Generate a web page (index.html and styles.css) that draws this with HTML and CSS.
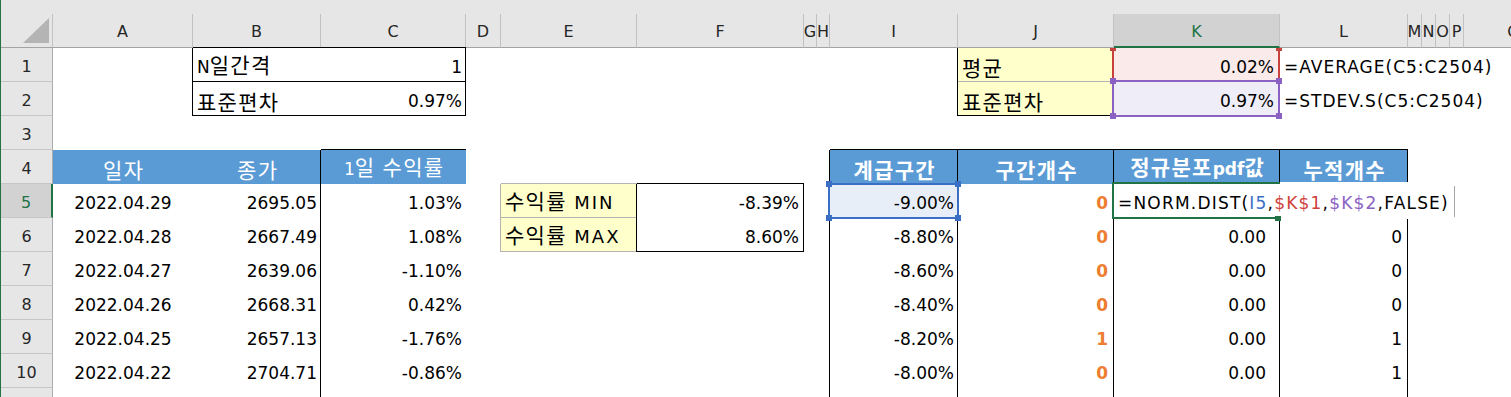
FILE: index.html
```html
<!DOCTYPE html>
<html lang="ko">
<head>
<meta charset="utf-8">
<title>Sheet</title>
<link rel="stylesheet" href="styles.css">
</head>
<body>
<div class="app">
  <div class="edge"></div>
  <div class="sheet">
    <div class="topbar"></div>

    <div class="row hdr">
      <div class="corner"><svg width="52" height="33" viewBox="0 0 52 33"><polygon points="22,29 48,29 48,4" fill="#b4b4b4"/></svg></div>
      <div class="ch">A</div><div class="ch">B</div><div class="ch">C</div><div class="ch">D</div>
      <div class="ch">E</div><div class="ch">F</div><div class="ch">G</div><div class="ch">H</div>
      <div class="ch">I</div><div class="ch">J</div><div class="ch sel">K</div><div class="ch">L</div>
      <div class="ch">M</div><div class="ch">N</div><div class="ch">O</div><div class="ch">P</div><div class="ch">Q</div>
    </div>

    <div class="row">
      <div class="rh">1</div>
      <div class="c"></div>
      <div class="c bl bt bb"><span>N<span class="ko">일간격</span></span></div>
      <div class="c r br bt bb">1</div>
      <div class="c"></div><div class="c"></div><div class="c"></div><div class="c"></div><div class="c"></div><div class="c"></div>
      <div class="c yel bl gb"><span class="ko">평균</span></div>
      <div class="c r pos pink pk1">0.02%<div class="ref red"><i class="h tl"></i><i class="h tr"></i></div></div>
      <div class="c f">=AVERAGE(C5:C2504)</div>
      <div class="c"></div><div class="c"></div><div class="c"></div><div class="c"></div><div class="c"></div>
    </div>

    <div class="row">
      <div class="rh">2</div>
      <div class="c"></div>
      <div class="c bl bb"><span class="ko">표준편차</span></div>
      <div class="c r br bb">0.97%</div>
      <div class="c"></div><div class="c"></div><div class="c"></div><div class="c"></div><div class="c"></div><div class="c"></div>
      <div class="c yel bl bb"><span class="ko">표준편차</span></div>
      <div class="c r pos lav pk1">0.97%<div class="ref pur"><i class="h tl"></i><i class="h tr"></i><i class="h bl4"></i><i class="h br4"></i></div></div>
      <div class="c f">=STDEV.S(C5:C2504)</div>
      <div class="c"></div><div class="c"></div><div class="c"></div><div class="c"></div><div class="c"></div>
    </div>

    <div class="row">
      <div class="rh">3</div>
      <div class="c"></div><div class="c"></div><div class="c"></div><div class="c"></div><div class="c"></div><div class="c"></div>
      <div class="c"></div><div class="c"></div><div class="c"></div><div class="c"></div><div class="c"></div><div class="c"></div>
      <div class="c"></div><div class="c"></div><div class="c"></div><div class="c"></div><div class="c"></div>
    </div>

    <div class="row">
      <div class="rh">4</div>
      <div class="c hb ctr"><span class="ko">일자</span></div>
      <div class="c hb ctr"><span class="ko">종가</span></div>
      <div class="c hb ctr bl bt"><span>1<span class="ko">일 수익률</span></span></div>
      <div class="c"></div><div class="c"></div><div class="c"></div><div class="c"></div><div class="c"></div>
      <div class="c hb ctr b bl bt br"><span class="ko">계급구간</span></div>
      <div class="c hb ctr b bt br"><span class="ko">구간개수</span></div>
      <div class="c hb ctr b bt br"><span><span class="ko">정규분포</span>pdf<span class="ko">값</span></span></div>
      <div class="c hb ctr b bt br"><span class="ko">누적개수</span></div>
      <div class="c"></div><div class="c"></div><div class="c"></div><div class="c"></div><div class="c"></div>
    </div>

    <div class="row">
      <div class="rh sel">5</div>
      <div class="c ctr">2022.04.29</div>
      <div class="c r">2695.05</div>
      <div class="c r bl">1.03%</div>
      <div class="c"></div>
      <div class="c yel gl gt gb"><span><span class="ko">수익률</span> <span class="lat">MIN</span></span></div>
      <div class="c r pf bl bt br">-8.39%</div>
      <div class="c"></div><div class="c"></div>
      <div class="c r pos sky bl br">-9.00%<div class="ref blu"><i class="h tl"></i><i class="h tr"></i><i class="h bl4"></i><i class="h br4"></i></div></div>
      <div class="c r pj org br">0</div>
      <div class="c pos br">
        <div class="editor"><div class="frame"><i class="grip"></i></div><span class="etext">=NORM.DIST(<span class="cb">I5</span>,<span class="cr">$K$1</span>,<span class="cp">$K$2</span>,FALSE)</span><i class="caret"></i></div>
      </div>
      <div class="c br"></div>
      <div class="c"></div><div class="c"></div><div class="c"></div><div class="c"></div><div class="c"></div>
    </div>

    <div class="row">
      <div class="rh">6</div>
      <div class="c ctr">2022.04.28</div>
      <div class="c r">2667.49</div>
      <div class="c r bl">1.08%</div>
      <div class="c"></div>
      <div class="c yel gl gb"><span><span class="ko">수익률</span> <span class="lat">MAX</span></span></div>
      <div class="c r pf bl br bb">8.60%</div>
      <div class="c"></div><div class="c"></div>
      <div class="c r bl br">-8.80%</div>
      <div class="c r pj org br">0</div>
      <div class="c r pk br">0.00</div>
      <div class="c r pl br">0</div>
      <div class="c"></div><div class="c"></div><div class="c"></div><div class="c"></div><div class="c"></div>
    </div>

    <div class="row">
      <div class="rh">7</div>
      <div class="c ctr">2022.04.27</div>
      <div class="c r">2639.06</div>
      <div class="c r bl">-1.10%</div>
      <div class="c"></div><div class="c"></div><div class="c"></div><div class="c"></div><div class="c"></div>
      <div class="c r bl br">-8.60%</div>
      <div class="c r pj org br">0</div>
      <div class="c r pk br">0.00</div>
      <div class="c r pl br">0</div>
      <div class="c"></div><div class="c"></div><div class="c"></div><div class="c"></div><div class="c"></div>
    </div>

    <div class="row">
      <div class="rh">8</div>
      <div class="c ctr">2022.04.26</div>
      <div class="c r">2668.31</div>
      <div class="c r bl">0.42%</div>
      <div class="c"></div><div class="c"></div><div class="c"></div><div class="c"></div><div class="c"></div>
      <div class="c r bl br">-8.40%</div>
      <div class="c r pj org br">0</div>
      <div class="c r pk br">0.00</div>
      <div class="c r pl br">0</div>
      <div class="c"></div><div class="c"></div><div class="c"></div><div class="c"></div><div class="c"></div>
    </div>

    <div class="row">
      <div class="rh">9</div>
      <div class="c ctr">2022.04.25</div>
      <div class="c r">2657.13</div>
      <div class="c r bl">-1.76%</div>
      <div class="c"></div><div class="c"></div><div class="c"></div><div class="c"></div><div class="c"></div>
      <div class="c r bl br">-8.20%</div>
      <div class="c r pj org br">1</div>
      <div class="c r pk br">0.00</div>
      <div class="c r pl br">1</div>
      <div class="c"></div><div class="c"></div><div class="c"></div><div class="c"></div><div class="c"></div>
    </div>

    <div class="row">
      <div class="rh">10</div>
      <div class="c ctr">2022.04.22</div>
      <div class="c r">2704.71</div>
      <div class="c r bl">-0.86%</div>
      <div class="c"></div><div class="c"></div><div class="c"></div><div class="c"></div><div class="c"></div>
      <div class="c r bl br">-8.00%</div>
      <div class="c r pj org br">0</div>
      <div class="c r pk br">0.00</div>
      <div class="c r pl br">1</div>
      <div class="c"></div><div class="c"></div><div class="c"></div><div class="c"></div><div class="c"></div>
    </div>

    <div class="row">
      <div class="rh"></div>
      <div class="c"></div><div class="c"></div>
      <div class="c bl"></div>
      <div class="c"></div><div class="c"></div><div class="c"></div><div class="c"></div><div class="c"></div>
      <div class="c bl br"></div>
      <div class="c br"></div>
      <div class="c br"></div>
      <div class="c br"></div>
      <div class="c"></div><div class="c"></div><div class="c"></div><div class="c"></div><div class="c"></div>
    </div>
  </div>
</div>
</body>
</html>
```

FILE: styles.css
```css
html, body {
  margin: 0;
  padding: 0;
  overflow: hidden;
  background: #ffffff;
}

body {
  font-family: "DejaVu Sans", "Noto Sans CJK KR", sans-serif;
  font-size: 17px;
  color: #000;
}

.app {
  display: flex;
  width: 1511px;
  height: 397px;
  overflow: hidden;
}

.edge {
  flex: none;
  width: 1px;
  background: #217346;
}

.sheet {
  flex: none;
  width: 1563px;
}

.topbar {
  height: 14px;
  background: #e6e6e6;
}

.row {
  display: grid;
  grid-template-columns: 52px 140px 128px 145px 35px 136px 167px 13px 13px 128px 156px 166px 128px 14px 14px 14px 14px 100px;
  height: 34px;
}

/* column header */
.hdr {
  background: #e6e6e6;
}

.corner,
.ch {
  box-sizing: border-box;
  height: 34px;
  border-bottom: 1px solid #a3a3a3;
}

.corner {
  border-right: 1px solid #c2c2c2;
}

.corner svg {
  display: block;
}

.ch {
  display: flex;
  align-items: flex-end;
  justify-content: center;
  overflow: hidden;
  border-right: 1px solid #c2c2c2;
  padding-bottom: 5px;
  font-size: 16px;
  line-height: 20px;
  color: #262626;
}

.ch.sel {
  background: #d2d2d2;
  color: #217346;
  border-bottom: 2px solid #217346;
  padding-bottom: 4px;
}

/* row header */
.rh {
  box-sizing: border-box;
  height: 34px;
  display: flex;
  align-items: flex-end;
  justify-content: center;
  background: #e6e6e6;
  border-right: 1px solid #ababab;
  border-bottom: 1px solid #c6c6c6;
  padding-bottom: 4px;
  font-size: 16px;
  line-height: 20px;
  color: #262626;
}

.rh.sel {
  background: #d2d2d2;
  color: #217346;
  border-right: 2px solid #217346;
}

/* cells */
.c {
  box-sizing: border-box;
  height: 34px;
  min-width: 0;
  display: flex;
  align-items: flex-end;
  justify-content: flex-start;
  padding: 0 4px 5px 4px;
  line-height: 20px;
  white-space: nowrap;
  overflow: visible;
  box-shadow: var(--sl, 0 0 0 transparent), var(--st, 0 0 0 transparent), var(--sr, 0 0 0 transparent), var(--sb, 0 0 0 transparent);
}

.r { justify-content: flex-end; }
.ctr { justify-content: center; }

.bl { --sl: -1px 0 0 #000; }
.bt { --st: 0 -1px 0 #000; }
.br { --sr: inset -1px 0 0 #000; }
.bb { --sb: inset 0 -1px 0 #000; }
.gl { --sl: -1px 0 0 #b4b4b4; }
.gt { --st: 0 -1px 0 #b4b4b4; }
.gb { --sb: inset 0 -1px 0 #b4b4b4; }

.ko {
  font-family: "Noto Sans CJK KR", sans-serif;
  font-size: 21px;
  letter-spacing: 1.3px;
}

.ctr .ko:last-child {
  margin-right: -1.3px;
}

.lat {
  font-size: 18px;
  letter-spacing: 2px;
  margin-left: 2px;
}

.f { letter-spacing: 1px; }

.yel { background: #ffffcc; }
.pink { background: #faeaea; }
.lav { background: #efedf7; }
.sky { background: #e8eef8; }

.hb {
  background: #5b9bd5;
  color: #ffffff;
}

.b { font-weight: bold; }

.org {
  color: #ed7d31;
  font-weight: bold;
}

.pf { padding-right: 5px; }
.pj { padding-right: 6px; }
.pk { padding-right: 14px; }
.pk1 { padding-right: 6px; }
.pl { padding-right: 6px; }

.pos { position: relative; }

/* formula reference highlights */
.ref {
  position: absolute;
  box-sizing: border-box;
}

.ref .h {
  position: absolute;
  width: 6px;
  height: 6px;
}

.ref.red {
  left: -2px;
  top: 0;
  width: 168px;
  height: 34px;
  border-left: 2px solid #c8423d;
  border-right: 2px solid #c8423d;
}

.ref.red .h { background: #c8423d; height: 3px; }
.ref.red .tl { left: -4px; top: 0; }
.ref.red .tr { right: -4px; top: 0; }

.ref.pur {
  left: -2px;
  top: -2px;
  width: 168px;
  height: 37px;
  border: 2px solid #8b62c4;
}

.ref.pur .h { background: #8b62c4; }

.ref.blu {
  left: -2px;
  top: -1px;
  width: 131px;
  height: 36px;
  border: 2px solid #3b6fc6;
}

.ref.blu .h { background: #3b6fc6; }

.ref .tl { left: -4px; top: -4px; }
.ref .tr { right: -4px; top: -4px; }
.ref .bl4 { left: -4px; bottom: -4px; }
.ref .br4 { right: -4px; bottom: -4px; }

/* in-cell editor */
.editor {
  position: absolute;
  left: -2px;
  top: -2px;
  width: 343px;
  height: 37px;
  box-sizing: border-box;
  background: #ffffff;
  display: flex;
  align-items: flex-end;
  padding: 0 0 6px 6px;
  line-height: 20px;
  white-space: nowrap;
}

.frame {
  position: absolute;
  left: 0;
  top: 0;
  width: 168px;
  height: 37px;
  box-sizing: border-box;
  border: 2px solid #217346;
  border-right: none;
}

.grip {
  position: absolute;
  left: 161px;
  top: 32px;
  width: 6px;
  height: 5px;
  background: #217346;
}

.etext {
  position: relative;
  letter-spacing: 1.2px;
}

.cb { color: #3b6fc6; }
.cr { color: #d0413b; }
.cp { color: #8b62c4; }

.caret {
  position: absolute;
  right: 0;
  top: 4px;
  width: 1px;
  height: 31px;
  background: #a6a6a6;
}
```
